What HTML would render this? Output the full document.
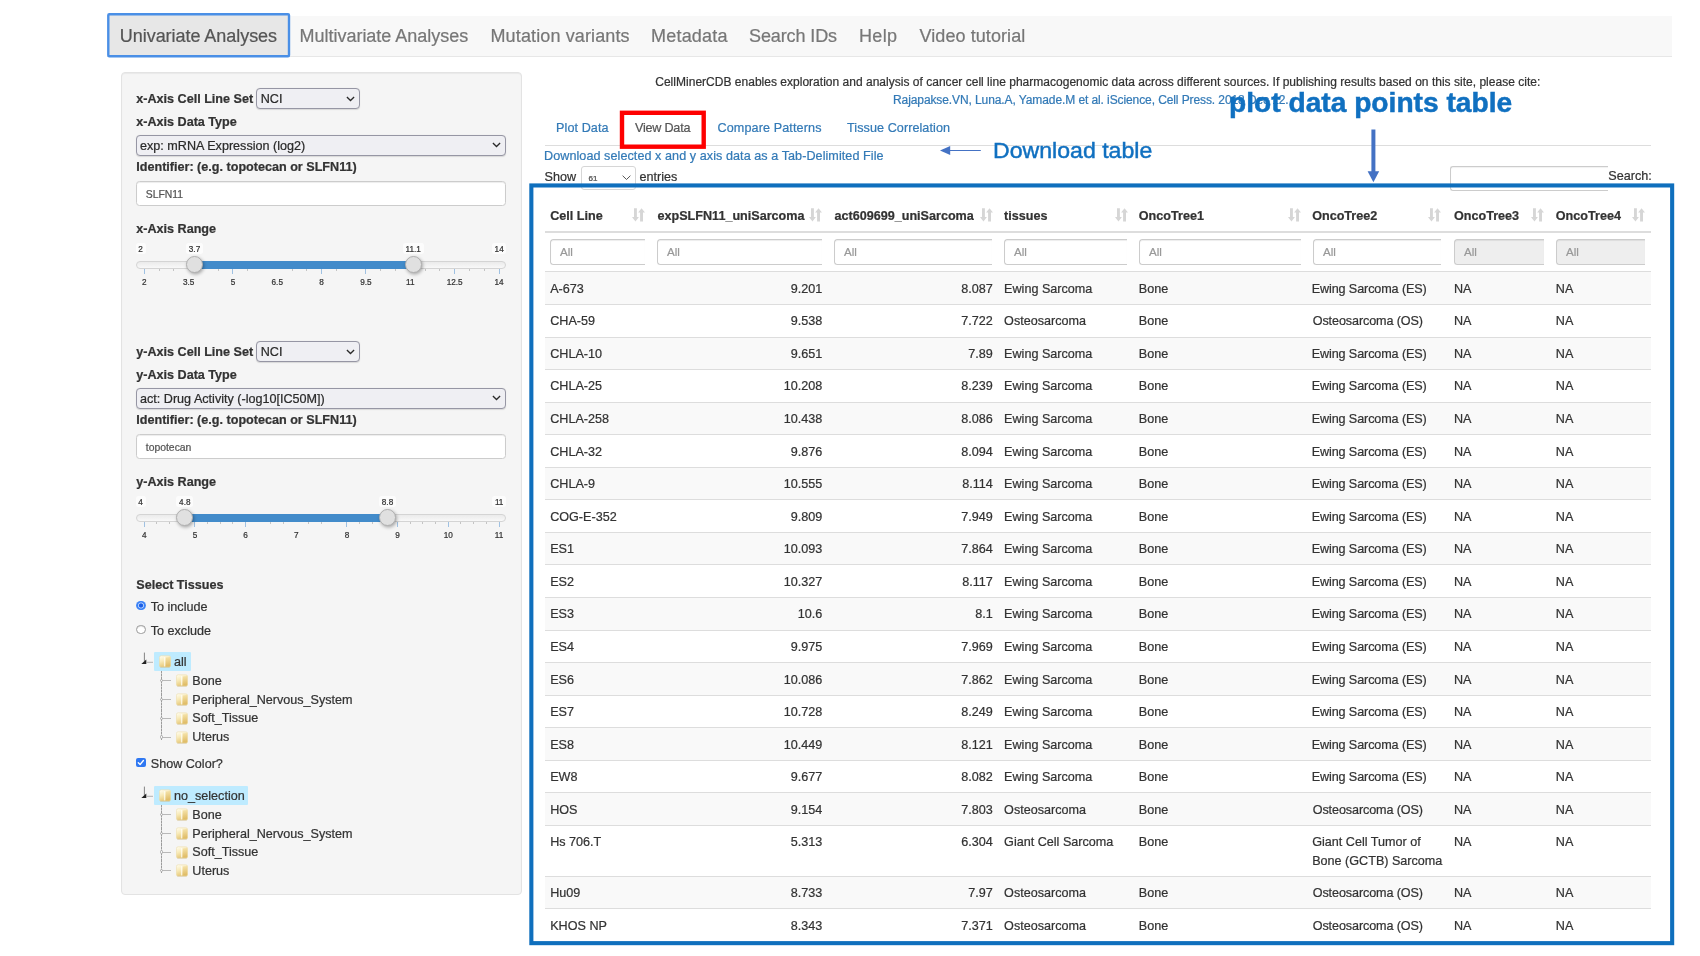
<!DOCTYPE html>
<html><head><meta charset="utf-8"><title>CellMinerCDB</title>
<style>
html,body{margin:0;padding:0;background:#fff;}
body{width:1700px;height:956px;position:relative;overflow:hidden;will-change:transform;font-family:"Liberation Sans",sans-serif;color:#333;}
.t{position:absolute;white-space:nowrap;-webkit-text-stroke:0.22px currentColor;}
.dl{-webkit-text-stroke:0.45px currentColor;}
.pd{-webkit-text-stroke:0.5px currentColor;}
.a{position:absolute;box-sizing:border-box;}
</style></head><body>

<div class="a" style="left:107px;top:16px;width:1565px;height:41px;background:#f8f8f8;border-bottom:1px solid #e7e7e7;"></div>
<svg class="a" style="left:104px;top:10px" width="190" height="51" viewBox="104 10 190 51"><rect x="108.3" y="14.2" width="180.7" height="42" rx="1" fill="#e7e7e7" stroke="#4a8fe6" stroke-width="2.4"/></svg>
<div class="t " style="top:26.00px;font-size:18px;line-height:21.6px;color:#555;left:119.80px;letter-spacing:-0.044px;">Univariate Analyses</div>
<div class="t " style="top:26.00px;font-size:18px;line-height:21.6px;color:#777;left:299.50px;letter-spacing:-0.015px;">Multivariate Analyses</div>
<div class="t " style="top:26.00px;font-size:18px;line-height:21.6px;color:#777;left:490.50px;letter-spacing:0.125px;">Mutation variants</div>
<div class="t " style="top:26.00px;font-size:18px;line-height:21.6px;color:#777;left:651.00px;letter-spacing:0.214px;">Metadata</div>
<div class="t " style="top:26.00px;font-size:18px;line-height:21.6px;color:#777;left:749.00px;letter-spacing:-0.111px;">Search IDs</div>
<div class="t " style="top:26.00px;font-size:18px;line-height:21.6px;color:#777;left:859.00px;letter-spacing:0.333px;">Help</div>
<div class="t " style="top:26.00px;font-size:18px;line-height:21.6px;color:#777;left:919.50px;letter-spacing:0.077px;">Video tutorial</div>
<div class="a" style="left:120.5px;top:72px;width:401.25px;height:823px;background:#f5f5f5;border:1px solid #e3e3e3;border-radius:4px;box-shadow:inset 0 1px 1px rgba(0,0,0,.05);"></div>
<div class="t " style="top:92.00px;font-size:12.6px;line-height:15.12px;color:#333;left:136.25px;font-weight:bold;">x-Axis Cell Line Set</div>
<div class="a" style="left:256.25px;top:88.25px;width:103.25px;height:20.5px;background:#efeff3;border:1px solid #9696a4;border-radius:4px;box-shadow:0 0.5px 1px rgba(0,0,0,.12);"></div>
<div class="t " style="top:92.00px;font-size:12.6px;line-height:15.12px;color:#2a2a2a;left:260.75px;">NCI</div>
<svg class="a" style="left:345.8px;top:95.5px" width="9" height="6" viewBox="0 0 9 6"><path d="M0.9 1 L4.5 4.5 L8.1 1" fill="none" stroke="#2a2a2a" stroke-width="1.3"/></svg>
<div class="t " style="top:115.00px;font-size:12.6px;line-height:15.12px;color:#333;left:136.25px;font-weight:bold;">x-Axis Data Type</div>
<div class="a" style="left:136.25px;top:134.5px;width:370px;height:21px;background:#efeff3;border:1px solid #9696a4;border-radius:4px;box-shadow:0 0.5px 1px rgba(0,0,0,.12);"></div>
<div class="t " style="top:139.00px;font-size:12.6px;line-height:15.12px;color:#2a2a2a;left:140.00px;">exp: mRNA Expression (log2)</div>
<svg class="a" style="left:492.3px;top:142px" width="9" height="6" viewBox="0 0 9 6"><path d="M0.9 1 L4.5 4.5 L8.1 1" fill="none" stroke="#2a2a2a" stroke-width="1.3"/></svg>
<div class="t " style="top:160.00px;font-size:12.6px;line-height:15.12px;color:#333;left:136.25px;font-weight:bold;">Identifier: (e.g. topotecan or SLFN11)</div>
<div class="a" style="left:136.25px;top:180.75px;width:370px;height:25px;background:#fff;border:1px solid #ccc;border-radius:3.5px;box-shadow:inset 0 1px 1px rgba(0,0,0,.075);"></div>
<div class="t " style="top:189.00px;font-size:10.4px;line-height:12.48px;color:#555;left:145.75px;">SLFN11</div>
<div class="t " style="top:222.00px;font-size:12.6px;line-height:15.12px;color:#333;left:136.25px;font-weight:bold;">x-Axis Range</div>
<div class="a" style="left:135.50px;top:243.4px;width:10.10px;height:10.6px;background:#fcfcfc;border-radius:2.5px;"></div>
<div class="t" style="left:135.50px;width:10.10px;text-align:center;top:244.7px;font-size:8.2px;line-height:10px;color:#333;">2</div>
<div class="a" style="left:491.80px;top:243.4px;width:14.70px;height:10.6px;background:#fcfcfc;border-radius:2.5px;"></div>
<div class="t" style="left:491.80px;width:14.70px;text-align:center;top:244.7px;font-size:8.2px;line-height:10px;color:#333;">14</div>
<div class="a" style="left:186.16px;top:243.4px;width:16.70px;height:10.6px;background:#fcfcfc;border-radius:2.5px;"></div>
<div class="t" style="left:186.16px;width:16.70px;text-align:center;top:244.7px;font-size:8.2px;line-height:10px;color:#333;">3.7</div>
<div class="a" style="left:402.62px;top:243.4px;width:21.30px;height:10.6px;background:#fcfcfc;border-radius:2.5px;"></div>
<div class="t" style="left:402.62px;width:21.30px;text-align:center;top:244.7px;font-size:8.2px;line-height:10px;color:#333;">11.1</div>
<div class="a" style="left:136.25px;top:261.25px;width:370px;height:7.5px;border:1px solid #d4d4d4;border-radius:7px;background:linear-gradient(to bottom,#e4e4e4 -50%,#fff 150%);"></div>
<div class="a" style="left:194.51px;top:261.25px;width:218.76px;height:7.3px;background:#428bca;"></div>
<div class="a" style="left:143.75px;top:268.9px;width:1px;height:5px;background:#9fc1e2;"></div>
<div class="t" style="left:124.25px;width:40px;text-align:center;top:277.7px;font-size:8.2px;line-height:10px;color:#333;">2</div>
<div class="a" style="left:158.53px;top:268.9px;width:1px;height:2.5px;background:#c4c4c4;"></div>
<div class="a" style="left:173.31px;top:268.9px;width:1px;height:2.5px;background:#c4c4c4;"></div>
<div class="t" style="left:168.59px;width:40px;text-align:center;top:277.7px;font-size:8.2px;line-height:10px;color:#333;">3.5</div>
<div class="a" style="left:217.66px;top:268.9px;width:1px;height:2.5px;background:#c4c4c4;"></div>
<div class="a" style="left:232.44px;top:268.9px;width:1px;height:5px;background:#9fc1e2;"></div>
<div class="t" style="left:212.94px;width:40px;text-align:center;top:277.7px;font-size:8.2px;line-height:10px;color:#333;">5</div>
<div class="a" style="left:247.22px;top:268.9px;width:1px;height:2.5px;background:#c4c4c4;"></div>
<div class="t" style="left:257.28px;width:40px;text-align:center;top:277.7px;font-size:8.2px;line-height:10px;color:#333;">6.5</div>
<div class="a" style="left:291.56px;top:268.9px;width:1px;height:2.5px;background:#c4c4c4;"></div>
<div class="a" style="left:306.34px;top:268.9px;width:1px;height:2.5px;background:#c4c4c4;"></div>
<div class="a" style="left:321.12px;top:268.9px;width:1px;height:5px;background:#9fc1e2;"></div>
<div class="t" style="left:301.62px;width:40px;text-align:center;top:277.7px;font-size:8.2px;line-height:10px;color:#333;">8</div>
<div class="a" style="left:335.91px;top:268.9px;width:1px;height:2.5px;background:#c4c4c4;"></div>
<div class="a" style="left:365.47px;top:268.9px;width:1px;height:5px;background:#9fc1e2;"></div>
<div class="t" style="left:345.97px;width:40px;text-align:center;top:277.7px;font-size:8.2px;line-height:10px;color:#333;">9.5</div>
<div class="a" style="left:380.25px;top:268.9px;width:1px;height:2.5px;background:#c4c4c4;"></div>
<div class="a" style="left:395.03px;top:268.9px;width:1px;height:2.5px;background:#c4c4c4;"></div>
<div class="t" style="left:390.31px;width:40px;text-align:center;top:277.7px;font-size:8.2px;line-height:10px;color:#333;">11</div>
<div class="a" style="left:424.59px;top:268.9px;width:1px;height:2.5px;background:#c4c4c4;"></div>
<div class="a" style="left:439.38px;top:268.9px;width:1px;height:2.5px;background:#c4c4c4;"></div>
<div class="a" style="left:454.16px;top:268.9px;width:1px;height:5px;background:#9fc1e2;"></div>
<div class="t" style="left:434.66px;width:40px;text-align:center;top:277.7px;font-size:8.2px;line-height:10px;color:#333;">12.5</div>
<div class="a" style="left:468.94px;top:268.9px;width:1px;height:2.5px;background:#c4c4c4;"></div>
<div class="a" style="left:483.72px;top:268.9px;width:1px;height:2.5px;background:#c4c4c4;"></div>
<div class="a" style="left:498.50px;top:268.9px;width:1px;height:5px;background:#9fc1e2;"></div>
<div class="t" style="left:479.00px;width:40px;text-align:center;top:277.7px;font-size:8.2px;line-height:10px;color:#333;">14</div>
<div class="a" style="left:186.01px;top:256.10px;width:17px;height:17px;border-radius:50%;background:#e0e0e0;border:1px solid #b0b0b0;box-shadow:1px 1.5px 3.5px rgba(0,0,0,.32);"></div>
<div class="a" style="left:404.77px;top:256.10px;width:17px;height:17px;border-radius:50%;background:#e0e0e0;border:1px solid #b0b0b0;box-shadow:1px 1.5px 3.5px rgba(0,0,0,.32);"></div>
<div class="t " style="top:345.00px;font-size:12.6px;line-height:15.12px;color:#333;left:136.25px;font-weight:bold;">y-Axis Cell Line Set</div>
<div class="a" style="left:256.25px;top:341.25px;width:103.25px;height:20.5px;background:#efeff3;border:1px solid #9696a4;border-radius:4px;box-shadow:0 0.5px 1px rgba(0,0,0,.12);"></div>
<div class="t " style="top:345.00px;font-size:12.6px;line-height:15.12px;color:#2a2a2a;left:260.75px;">NCI</div>
<svg class="a" style="left:345.8px;top:348.5px" width="9" height="6" viewBox="0 0 9 6"><path d="M0.9 1 L4.5 4.5 L8.1 1" fill="none" stroke="#2a2a2a" stroke-width="1.3"/></svg>
<div class="t " style="top:368.00px;font-size:12.6px;line-height:15.12px;color:#333;left:136.25px;font-weight:bold;">y-Axis Data Type</div>
<div class="a" style="left:136.25px;top:387.5px;width:370px;height:21px;background:#efeff3;border:1px solid #9696a4;border-radius:4px;box-shadow:0 0.5px 1px rgba(0,0,0,.12);"></div>
<div class="t " style="top:392.00px;font-size:12.6px;line-height:15.12px;color:#2a2a2a;left:140.00px;">act: Drug Activity (-log10[IC50M])</div>
<svg class="a" style="left:492.3px;top:395px" width="9" height="6" viewBox="0 0 9 6"><path d="M0.9 1 L4.5 4.5 L8.1 1" fill="none" stroke="#2a2a2a" stroke-width="1.3"/></svg>
<div class="t " style="top:413.00px;font-size:12.6px;line-height:15.12px;color:#333;left:136.25px;font-weight:bold;">Identifier: (e.g. topotecan or SLFN11)</div>
<div class="a" style="left:136.25px;top:433.75px;width:370px;height:25px;background:#fff;border:1px solid #ccc;border-radius:3.5px;box-shadow:inset 0 1px 1px rgba(0,0,0,.075);"></div>
<div class="t " style="top:442.00px;font-size:10.4px;line-height:12.48px;color:#555;left:145.75px;">topotecan</div>
<div class="t " style="top:475.00px;font-size:12.6px;line-height:15.12px;color:#333;left:136.25px;font-weight:bold;">y-Axis Range</div>
<div class="a" style="left:135.50px;top:496.4px;width:10.10px;height:10.6px;background:#fcfcfc;border-radius:2.5px;"></div>
<div class="t" style="left:135.50px;width:10.10px;text-align:center;top:497.7px;font-size:8.2px;line-height:10px;color:#333;">4</div>
<div class="a" style="left:491.80px;top:496.4px;width:14.70px;height:10.6px;background:#fcfcfc;border-radius:2.5px;"></div>
<div class="t" style="left:491.80px;width:14.70px;text-align:center;top:497.7px;font-size:8.2px;line-height:10px;color:#333;">11</div>
<div class="a" style="left:176.44px;top:496.4px;width:16.70px;height:10.6px;background:#fcfcfc;border-radius:2.5px;"></div>
<div class="t" style="left:176.44px;width:16.70px;text-align:center;top:497.7px;font-size:8.2px;line-height:10px;color:#333;">4.8</div>
<div class="a" style="left:379.16px;top:496.4px;width:16.70px;height:10.6px;background:#fcfcfc;border-radius:2.5px;"></div>
<div class="t" style="left:379.16px;width:16.70px;text-align:center;top:497.7px;font-size:8.2px;line-height:10px;color:#333;">8.8</div>
<div class="a" style="left:136.25px;top:514.25px;width:370px;height:7.5px;border:1px solid #d4d4d4;border-radius:7px;background:linear-gradient(to bottom,#e4e4e4 -50%,#fff 150%);"></div>
<div class="a" style="left:184.79px;top:514.25px;width:202.71px;height:7.3px;background:#428bca;"></div>
<div class="a" style="left:143.75px;top:521.9px;width:1px;height:5px;background:#9fc1e2;"></div>
<div class="t" style="left:124.25px;width:40px;text-align:center;top:530.7px;font-size:8.2px;line-height:10px;color:#333;">4</div>
<div class="a" style="left:156.42px;top:521.9px;width:1px;height:2.5px;background:#c4c4c4;"></div>
<div class="a" style="left:169.09px;top:521.9px;width:1px;height:2.5px;background:#c4c4c4;"></div>
<div class="a" style="left:181.76px;top:521.9px;width:1px;height:2.5px;background:#c4c4c4;"></div>
<div class="a" style="left:194.43px;top:521.9px;width:1px;height:5px;background:#9fc1e2;"></div>
<div class="t" style="left:174.93px;width:40px;text-align:center;top:530.7px;font-size:8.2px;line-height:10px;color:#333;">5</div>
<div class="a" style="left:207.10px;top:521.9px;width:1px;height:2.5px;background:#c4c4c4;"></div>
<div class="a" style="left:219.77px;top:521.9px;width:1px;height:2.5px;background:#c4c4c4;"></div>
<div class="a" style="left:232.44px;top:521.9px;width:1px;height:2.5px;background:#c4c4c4;"></div>
<div class="a" style="left:245.11px;top:521.9px;width:1px;height:5px;background:#9fc1e2;"></div>
<div class="t" style="left:225.61px;width:40px;text-align:center;top:530.7px;font-size:8.2px;line-height:10px;color:#333;">6</div>
<div class="a" style="left:270.45px;top:521.9px;width:1px;height:2.5px;background:#c4c4c4;"></div>
<div class="a" style="left:283.12px;top:521.9px;width:1px;height:2.5px;background:#c4c4c4;"></div>
<div class="t" style="left:276.29px;width:40px;text-align:center;top:530.7px;font-size:8.2px;line-height:10px;color:#333;">7</div>
<div class="a" style="left:308.46px;top:521.9px;width:1px;height:2.5px;background:#c4c4c4;"></div>
<div class="a" style="left:321.12px;top:521.9px;width:1px;height:2.5px;background:#c4c4c4;"></div>
<div class="a" style="left:346.46px;top:521.9px;width:1px;height:5px;background:#9fc1e2;"></div>
<div class="t" style="left:326.96px;width:40px;text-align:center;top:530.7px;font-size:8.2px;line-height:10px;color:#333;">8</div>
<div class="a" style="left:359.13px;top:521.9px;width:1px;height:2.5px;background:#c4c4c4;"></div>
<div class="a" style="left:371.80px;top:521.9px;width:1px;height:2.5px;background:#c4c4c4;"></div>
<div class="a" style="left:384.47px;top:521.9px;width:1px;height:2.5px;background:#c4c4c4;"></div>
<div class="a" style="left:397.14px;top:521.9px;width:1px;height:5px;background:#9fc1e2;"></div>
<div class="t" style="left:377.64px;width:40px;text-align:center;top:530.7px;font-size:8.2px;line-height:10px;color:#333;">9</div>
<div class="a" style="left:409.81px;top:521.9px;width:1px;height:2.5px;background:#c4c4c4;"></div>
<div class="a" style="left:422.48px;top:521.9px;width:1px;height:2.5px;background:#c4c4c4;"></div>
<div class="a" style="left:435.15px;top:521.9px;width:1px;height:2.5px;background:#c4c4c4;"></div>
<div class="a" style="left:447.82px;top:521.9px;width:1px;height:5px;background:#9fc1e2;"></div>
<div class="t" style="left:428.32px;width:40px;text-align:center;top:530.7px;font-size:8.2px;line-height:10px;color:#333;">10</div>
<div class="a" style="left:460.49px;top:521.9px;width:1px;height:2.5px;background:#c4c4c4;"></div>
<div class="a" style="left:473.16px;top:521.9px;width:1px;height:2.5px;background:#c4c4c4;"></div>
<div class="a" style="left:485.83px;top:521.9px;width:1px;height:2.5px;background:#c4c4c4;"></div>
<div class="a" style="left:498.50px;top:521.9px;width:1px;height:5px;background:#9fc1e2;"></div>
<div class="t" style="left:479.00px;width:40px;text-align:center;top:530.7px;font-size:8.2px;line-height:10px;color:#333;">11</div>
<div class="a" style="left:176.29px;top:509.10px;width:17px;height:17px;border-radius:50%;background:#e0e0e0;border:1px solid #b0b0b0;box-shadow:1px 1.5px 3.5px rgba(0,0,0,.32);"></div>
<div class="a" style="left:379.01px;top:509.10px;width:17px;height:17px;border-radius:50%;background:#e0e0e0;border:1px solid #b0b0b0;box-shadow:1px 1.5px 3.5px rgba(0,0,0,.32);"></div>
<div class="t " style="top:578.00px;font-size:12.6px;line-height:15.12px;color:#333;left:136.25px;font-weight:bold;">Select Tissues</div>
<div class="a" style="left:136.3px;top:600.7px;width:9.6px;height:9.6px;border-radius:50%;background:radial-gradient(circle at 50% 50%, #1d5fe6 0, #1d5fe6 1.7px, #a9c9fb 2.4px, #a9c9fb 2.7px, #3b82f6 3.4px, #3b82f6 4.3px, #5a96f7 4.8px);"></div>
<div class="t " style="top:600.00px;font-size:12.6px;line-height:15.12px;color:#333;left:150.75px;">To include</div>
<div class="a" style="left:136.3px;top:624.7px;width:9.6px;height:9.6px;border-radius:50%;background:#fff;border:1px solid #9a9a9a;box-shadow:inset 0 1px 1px rgba(0,0,0,.12);"></div>
<div class="t " style="top:624.00px;font-size:12.6px;line-height:15.12px;color:#333;left:150.75px;">To exclude</div>
<div class="a" style="left:153.9px;top:652.3px;width:37.4px;height:18.6px;background:#beebff;border-radius:1px;"></div>
<svg class="a" style="left:140px;top:651px" width="14" height="14" viewBox="0 0 14 14"><path d="M4.4 1.6 L4.4 10.6" stroke="#777" stroke-width="0.9" fill="none"/><path d="M1.3 12.9 L6.3 12.9 L6.3 8.5 Z" fill="#222"/><path d="M6.5 11.3 L13 11.3" stroke="#aaa" stroke-width="0.9" fill="none"/></svg>
<svg class="a" style="left:158.7px;top:655.2px" width="12" height="13" viewBox="0 0 12 13"><defs><linearGradient id="fg1" x1="0" y1="0" x2="0.35" y2="1"><stop offset="0" stop-color="#fffef4"/><stop offset="0.5" stop-color="#f8eab8"/><stop offset="1" stop-color="#e6c878"/></linearGradient><linearGradient id="fh1" x1="0" y1="0" x2="0" y2="1"><stop offset="0" stop-color="#f0d894"/><stop offset="1" stop-color="#dbb35a"/></linearGradient></defs><path d="M0.4 2.6 Q0.4 0.8 2.2 0.8 L9.8 0.8 Q11.6 0.8 11.6 2.6 L11.6 10.4 Q11.6 12 9.9 12 L2.1 12 Q0.4 12 0.4 10.4 Z" fill="url(#fg1)" stroke="#ead9a0" stroke-width="0.5"/><path d="M6.6 2.4 L11.2 1.9 L11.2 11.6 L6.6 11.6 Z" fill="url(#fh1)" opacity=".6"/><path d="M4.9 1.8 L6.3 2.3 L6.3 11.6 L4.9 11.6 Z" fill="#fffef6" opacity=".75"/><path d="M1.2 12.3 L10.8 12.3" stroke="#c4ab6e" stroke-width="0.7" opacity=".55"/></svg>
<div class="t " style="top:655.00px;font-size:12.6px;line-height:15.12px;color:#333;left:174.00px;">all</div>
<div class="a" style="left:161.2px;top:671px;width:1px;height:68.5px;background:repeating-linear-gradient(to bottom,#9c9c9c 0,#9c9c9c 2.2px,#c6c6c6 2.2px,#c6c6c6 3.2px);"></div>
<div class="a" style="left:162.4px;top:680.30px;width:8.8px;height:1px;background:#b8b8b8;"></div>
<div class="a" style="left:160px;top:679.10px;width:3.4px;height:3.4px;border-radius:50%;background:#f5f5f5;border:0.7px solid #aaa;"></div>
<svg class="a" style="left:176.2px;top:674.4px" width="12" height="13" viewBox="0 0 12 13"><defs><linearGradient id="fg2" x1="0" y1="0" x2="0.35" y2="1"><stop offset="0" stop-color="#fffef4"/><stop offset="0.5" stop-color="#f8eab8"/><stop offset="1" stop-color="#e6c878"/></linearGradient><linearGradient id="fh2" x1="0" y1="0" x2="0" y2="1"><stop offset="0" stop-color="#f0d894"/><stop offset="1" stop-color="#dbb35a"/></linearGradient></defs><path d="M0.4 2.6 Q0.4 0.8 2.2 0.8 L9.8 0.8 Q11.6 0.8 11.6 2.6 L11.6 10.4 Q11.6 12 9.9 12 L2.1 12 Q0.4 12 0.4 10.4 Z" fill="url(#fg2)" stroke="#ead9a0" stroke-width="0.5"/><path d="M6.6 2.4 L11.2 1.9 L11.2 11.6 L6.6 11.6 Z" fill="url(#fh2)" opacity=".6"/><path d="M4.9 1.8 L6.3 2.3 L6.3 11.6 L4.9 11.6 Z" fill="#fffef6" opacity=".75"/><path d="M1.2 12.3 L10.8 12.3" stroke="#c4ab6e" stroke-width="0.7" opacity=".55"/></svg>
<div class="t " style="top:674.00px;font-size:12.6px;line-height:15.12px;color:#333;left:192.30px;">Bone</div>
<div class="a" style="left:162.4px;top:699.05px;width:8.8px;height:1px;background:#b8b8b8;"></div>
<div class="a" style="left:160px;top:697.85px;width:3.4px;height:3.4px;border-radius:50%;background:#f5f5f5;border:0.7px solid #aaa;"></div>
<svg class="a" style="left:176.2px;top:693.15px" width="12" height="13" viewBox="0 0 12 13"><defs><linearGradient id="fg3" x1="0" y1="0" x2="0.35" y2="1"><stop offset="0" stop-color="#fffef4"/><stop offset="0.5" stop-color="#f8eab8"/><stop offset="1" stop-color="#e6c878"/></linearGradient><linearGradient id="fh3" x1="0" y1="0" x2="0" y2="1"><stop offset="0" stop-color="#f0d894"/><stop offset="1" stop-color="#dbb35a"/></linearGradient></defs><path d="M0.4 2.6 Q0.4 0.8 2.2 0.8 L9.8 0.8 Q11.6 0.8 11.6 2.6 L11.6 10.4 Q11.6 12 9.9 12 L2.1 12 Q0.4 12 0.4 10.4 Z" fill="url(#fg3)" stroke="#ead9a0" stroke-width="0.5"/><path d="M6.6 2.4 L11.2 1.9 L11.2 11.6 L6.6 11.6 Z" fill="url(#fh3)" opacity=".6"/><path d="M4.9 1.8 L6.3 2.3 L6.3 11.6 L4.9 11.6 Z" fill="#fffef6" opacity=".75"/><path d="M1.2 12.3 L10.8 12.3" stroke="#c4ab6e" stroke-width="0.7" opacity=".55"/></svg>
<div class="t " style="top:693.00px;font-size:12.6px;line-height:15.12px;color:#333;left:192.30px;">Peripheral_Nervous_System</div>
<div class="a" style="left:162.4px;top:717.80px;width:8.8px;height:1px;background:#b8b8b8;"></div>
<div class="a" style="left:160px;top:716.60px;width:3.4px;height:3.4px;border-radius:50%;background:#f5f5f5;border:0.7px solid #aaa;"></div>
<svg class="a" style="left:176.2px;top:711.9px" width="12" height="13" viewBox="0 0 12 13"><defs><linearGradient id="fg4" x1="0" y1="0" x2="0.35" y2="1"><stop offset="0" stop-color="#fffef4"/><stop offset="0.5" stop-color="#f8eab8"/><stop offset="1" stop-color="#e6c878"/></linearGradient><linearGradient id="fh4" x1="0" y1="0" x2="0" y2="1"><stop offset="0" stop-color="#f0d894"/><stop offset="1" stop-color="#dbb35a"/></linearGradient></defs><path d="M0.4 2.6 Q0.4 0.8 2.2 0.8 L9.8 0.8 Q11.6 0.8 11.6 2.6 L11.6 10.4 Q11.6 12 9.9 12 L2.1 12 Q0.4 12 0.4 10.4 Z" fill="url(#fg4)" stroke="#ead9a0" stroke-width="0.5"/><path d="M6.6 2.4 L11.2 1.9 L11.2 11.6 L6.6 11.6 Z" fill="url(#fh4)" opacity=".6"/><path d="M4.9 1.8 L6.3 2.3 L6.3 11.6 L4.9 11.6 Z" fill="#fffef6" opacity=".75"/><path d="M1.2 12.3 L10.8 12.3" stroke="#c4ab6e" stroke-width="0.7" opacity=".55"/></svg>
<div class="t " style="top:711.00px;font-size:12.6px;line-height:15.12px;color:#333;left:192.30px;">Soft_Tissue</div>
<div class="a" style="left:162.4px;top:736.55px;width:8.8px;height:1px;background:#b8b8b8;"></div>
<div class="a" style="left:160px;top:735.35px;width:3.4px;height:3.4px;border-radius:50%;background:#f5f5f5;border:0.7px solid #aaa;"></div>
<svg class="a" style="left:176.2px;top:730.65px" width="12" height="13" viewBox="0 0 12 13"><defs><linearGradient id="fg5" x1="0" y1="0" x2="0.35" y2="1"><stop offset="0" stop-color="#fffef4"/><stop offset="0.5" stop-color="#f8eab8"/><stop offset="1" stop-color="#e6c878"/></linearGradient><linearGradient id="fh5" x1="0" y1="0" x2="0" y2="1"><stop offset="0" stop-color="#f0d894"/><stop offset="1" stop-color="#dbb35a"/></linearGradient></defs><path d="M0.4 2.6 Q0.4 0.8 2.2 0.8 L9.8 0.8 Q11.6 0.8 11.6 2.6 L11.6 10.4 Q11.6 12 9.9 12 L2.1 12 Q0.4 12 0.4 10.4 Z" fill="url(#fg5)" stroke="#ead9a0" stroke-width="0.5"/><path d="M6.6 2.4 L11.2 1.9 L11.2 11.6 L6.6 11.6 Z" fill="url(#fh5)" opacity=".6"/><path d="M4.9 1.8 L6.3 2.3 L6.3 11.6 L4.9 11.6 Z" fill="#fffef6" opacity=".75"/><path d="M1.2 12.3 L10.8 12.3" stroke="#c4ab6e" stroke-width="0.7" opacity=".55"/></svg>
<div class="t " style="top:730.00px;font-size:12.6px;line-height:15.12px;color:#333;left:192.30px;">Uterus</div>
<div class="a" style="left:136.4px;top:758.1px;width:9.6px;height:9px;border-radius:2px;background:#2f78f2;"></div>
<svg class="a" style="left:136.4px;top:758.1px" width="9.6" height="9" viewBox="0 0 9.6 9"><path d="M2.3 4.7 L4.1 6.5 L7.4 2.5" fill="none" stroke="#fff" stroke-width="1.35" stroke-linecap="round" stroke-linejoin="round"/></svg>
<div class="t " style="top:757.00px;font-size:12.6px;line-height:15.12px;color:#333;left:150.75px;">Show Color?</div>
<div class="a" style="left:153.9px;top:786.05px;width:94.2px;height:18.6px;background:#beebff;border-radius:1px;"></div>
<svg class="a" style="left:140px;top:784.75px" width="14" height="14" viewBox="0 0 14 14"><path d="M4.4 1.6 L4.4 10.6" stroke="#777" stroke-width="0.9" fill="none"/><path d="M1.3 12.9 L6.3 12.9 L6.3 8.5 Z" fill="#222"/><path d="M6.5 11.3 L13 11.3" stroke="#aaa" stroke-width="0.9" fill="none"/></svg>
<svg class="a" style="left:158.7px;top:788.95px" width="12" height="13" viewBox="0 0 12 13"><defs><linearGradient id="fg6" x1="0" y1="0" x2="0.35" y2="1"><stop offset="0" stop-color="#fffef4"/><stop offset="0.5" stop-color="#f8eab8"/><stop offset="1" stop-color="#e6c878"/></linearGradient><linearGradient id="fh6" x1="0" y1="0" x2="0" y2="1"><stop offset="0" stop-color="#f0d894"/><stop offset="1" stop-color="#dbb35a"/></linearGradient></defs><path d="M0.4 2.6 Q0.4 0.8 2.2 0.8 L9.8 0.8 Q11.6 0.8 11.6 2.6 L11.6 10.4 Q11.6 12 9.9 12 L2.1 12 Q0.4 12 0.4 10.4 Z" fill="url(#fg6)" stroke="#ead9a0" stroke-width="0.5"/><path d="M6.6 2.4 L11.2 1.9 L11.2 11.6 L6.6 11.6 Z" fill="url(#fh6)" opacity=".6"/><path d="M4.9 1.8 L6.3 2.3 L6.3 11.6 L4.9 11.6 Z" fill="#fffef6" opacity=".75"/><path d="M1.2 12.3 L10.8 12.3" stroke="#c4ab6e" stroke-width="0.7" opacity=".55"/></svg>
<div class="t " style="top:789.00px;font-size:12.6px;line-height:15.12px;color:#333;left:174.00px;">no_selection</div>
<div class="a" style="left:161.2px;top:804.75px;width:1px;height:68.5px;background:repeating-linear-gradient(to bottom,#9c9c9c 0,#9c9c9c 2.2px,#c6c6c6 2.2px,#c6c6c6 3.2px);"></div>
<div class="a" style="left:162.4px;top:814.05px;width:8.8px;height:1px;background:#b8b8b8;"></div>
<div class="a" style="left:160px;top:812.85px;width:3.4px;height:3.4px;border-radius:50%;background:#f5f5f5;border:0.7px solid #aaa;"></div>
<svg class="a" style="left:176.2px;top:808.15px" width="12" height="13" viewBox="0 0 12 13"><defs><linearGradient id="fg7" x1="0" y1="0" x2="0.35" y2="1"><stop offset="0" stop-color="#fffef4"/><stop offset="0.5" stop-color="#f8eab8"/><stop offset="1" stop-color="#e6c878"/></linearGradient><linearGradient id="fh7" x1="0" y1="0" x2="0" y2="1"><stop offset="0" stop-color="#f0d894"/><stop offset="1" stop-color="#dbb35a"/></linearGradient></defs><path d="M0.4 2.6 Q0.4 0.8 2.2 0.8 L9.8 0.8 Q11.6 0.8 11.6 2.6 L11.6 10.4 Q11.6 12 9.9 12 L2.1 12 Q0.4 12 0.4 10.4 Z" fill="url(#fg7)" stroke="#ead9a0" stroke-width="0.5"/><path d="M6.6 2.4 L11.2 1.9 L11.2 11.6 L6.6 11.6 Z" fill="url(#fh7)" opacity=".6"/><path d="M4.9 1.8 L6.3 2.3 L6.3 11.6 L4.9 11.6 Z" fill="#fffef6" opacity=".75"/><path d="M1.2 12.3 L10.8 12.3" stroke="#c4ab6e" stroke-width="0.7" opacity=".55"/></svg>
<div class="t " style="top:808.00px;font-size:12.6px;line-height:15.12px;color:#333;left:192.30px;">Bone</div>
<div class="a" style="left:162.4px;top:832.80px;width:8.8px;height:1px;background:#b8b8b8;"></div>
<div class="a" style="left:160px;top:831.60px;width:3.4px;height:3.4px;border-radius:50%;background:#f5f5f5;border:0.7px solid #aaa;"></div>
<svg class="a" style="left:176.2px;top:826.9px" width="12" height="13" viewBox="0 0 12 13"><defs><linearGradient id="fg8" x1="0" y1="0" x2="0.35" y2="1"><stop offset="0" stop-color="#fffef4"/><stop offset="0.5" stop-color="#f8eab8"/><stop offset="1" stop-color="#e6c878"/></linearGradient><linearGradient id="fh8" x1="0" y1="0" x2="0" y2="1"><stop offset="0" stop-color="#f0d894"/><stop offset="1" stop-color="#dbb35a"/></linearGradient></defs><path d="M0.4 2.6 Q0.4 0.8 2.2 0.8 L9.8 0.8 Q11.6 0.8 11.6 2.6 L11.6 10.4 Q11.6 12 9.9 12 L2.1 12 Q0.4 12 0.4 10.4 Z" fill="url(#fg8)" stroke="#ead9a0" stroke-width="0.5"/><path d="M6.6 2.4 L11.2 1.9 L11.2 11.6 L6.6 11.6 Z" fill="url(#fh8)" opacity=".6"/><path d="M4.9 1.8 L6.3 2.3 L6.3 11.6 L4.9 11.6 Z" fill="#fffef6" opacity=".75"/><path d="M1.2 12.3 L10.8 12.3" stroke="#c4ab6e" stroke-width="0.7" opacity=".55"/></svg>
<div class="t " style="top:827.00px;font-size:12.6px;line-height:15.12px;color:#333;left:192.30px;">Peripheral_Nervous_System</div>
<div class="a" style="left:162.4px;top:851.55px;width:8.8px;height:1px;background:#b8b8b8;"></div>
<div class="a" style="left:160px;top:850.35px;width:3.4px;height:3.4px;border-radius:50%;background:#f5f5f5;border:0.7px solid #aaa;"></div>
<svg class="a" style="left:176.2px;top:845.65px" width="12" height="13" viewBox="0 0 12 13"><defs><linearGradient id="fg9" x1="0" y1="0" x2="0.35" y2="1"><stop offset="0" stop-color="#fffef4"/><stop offset="0.5" stop-color="#f8eab8"/><stop offset="1" stop-color="#e6c878"/></linearGradient><linearGradient id="fh9" x1="0" y1="0" x2="0" y2="1"><stop offset="0" stop-color="#f0d894"/><stop offset="1" stop-color="#dbb35a"/></linearGradient></defs><path d="M0.4 2.6 Q0.4 0.8 2.2 0.8 L9.8 0.8 Q11.6 0.8 11.6 2.6 L11.6 10.4 Q11.6 12 9.9 12 L2.1 12 Q0.4 12 0.4 10.4 Z" fill="url(#fg9)" stroke="#ead9a0" stroke-width="0.5"/><path d="M6.6 2.4 L11.2 1.9 L11.2 11.6 L6.6 11.6 Z" fill="url(#fh9)" opacity=".6"/><path d="M4.9 1.8 L6.3 2.3 L6.3 11.6 L4.9 11.6 Z" fill="#fffef6" opacity=".75"/><path d="M1.2 12.3 L10.8 12.3" stroke="#c4ab6e" stroke-width="0.7" opacity=".55"/></svg>
<div class="t " style="top:845.00px;font-size:12.6px;line-height:15.12px;color:#333;left:192.30px;">Soft_Tissue</div>
<div class="a" style="left:162.4px;top:870.30px;width:8.8px;height:1px;background:#b8b8b8;"></div>
<div class="a" style="left:160px;top:869.10px;width:3.4px;height:3.4px;border-radius:50%;background:#f5f5f5;border:0.7px solid #aaa;"></div>
<svg class="a" style="left:176.2px;top:864.4px" width="12" height="13" viewBox="0 0 12 13"><defs><linearGradient id="fg10" x1="0" y1="0" x2="0.35" y2="1"><stop offset="0" stop-color="#fffef4"/><stop offset="0.5" stop-color="#f8eab8"/><stop offset="1" stop-color="#e6c878"/></linearGradient><linearGradient id="fh10" x1="0" y1="0" x2="0" y2="1"><stop offset="0" stop-color="#f0d894"/><stop offset="1" stop-color="#dbb35a"/></linearGradient></defs><path d="M0.4 2.6 Q0.4 0.8 2.2 0.8 L9.8 0.8 Q11.6 0.8 11.6 2.6 L11.6 10.4 Q11.6 12 9.9 12 L2.1 12 Q0.4 12 0.4 10.4 Z" fill="url(#fg10)" stroke="#ead9a0" stroke-width="0.5"/><path d="M6.6 2.4 L11.2 1.9 L11.2 11.6 L6.6 11.6 Z" fill="url(#fh10)" opacity=".6"/><path d="M4.9 1.8 L6.3 2.3 L6.3 11.6 L4.9 11.6 Z" fill="#fffef6" opacity=".75"/><path d="M1.2 12.3 L10.8 12.3" stroke="#c4ab6e" stroke-width="0.7" opacity=".55"/></svg>
<div class="t " style="top:864.00px;font-size:12.6px;line-height:15.12px;color:#333;left:192.30px;">Uterus</div>
<div class="t " style="top:75.00px;font-size:12px;line-height:14.4px;color:#333;left:655.25px;letter-spacing:0.017px;">CellMinerCDB enables exploration and analysis of cancer cell line pharmacogenomic data across different sources. If publishing results based on this site, please cite:</div>
<div class="t " style="top:93.00px;font-size:12px;line-height:14.4px;color:#337ab7;left:893.00px;letter-spacing:-0.095px;">Rajapakse.VN, Luna.A, Yamade.M et al. iScience, Cell Press. 2018 Dec 12.</div>
<div class="a" style="left:544.5px;top:145px;width:1106.25px;height:1px;background:#ddd;"></div>
<div class="t " style="top:121.00px;font-size:12.6px;line-height:15.12px;color:#337ab7;left:556.00px;letter-spacing:0.094px;">Plot Data</div>
<div class="t " style="top:121.00px;font-size:12.6px;line-height:15.12px;color:#555;left:635.00px;letter-spacing:-0.219px;">View Data</div>
<div class="t " style="top:121.00px;font-size:12.6px;line-height:15.12px;color:#337ab7;left:717.50px;letter-spacing:0.117px;">Compare Patterns</div>
<div class="t " style="top:121.00px;font-size:12.6px;line-height:15.12px;color:#337ab7;left:847.00px;letter-spacing:0.074px;">Tissue Correlation</div>
<svg class="a" style="left:615px;top:106px" width="96" height="48" viewBox="615 106 96 48"><rect x="622.0" y="112.8" width="81.7" height="33.9" fill="none" stroke="#fe0000" stroke-width="4.4"/></svg>
<div class="t " style="top:149.00px;font-size:12.6px;line-height:15.12px;color:#337ab7;left:544.00px;letter-spacing:0.065px;">Download selected x and y axis data as a Tab-Delimited File</div>
<div class="t " style="top:170.00px;font-size:12.6px;line-height:15.12px;color:#333;left:544.50px;">Show</div>
<div class="a" style="left:580.5px;top:166.4px;width:55px;height:23.2px;background:#fff;border:1px solid #d6d6d6;border-radius:3px;"></div>
<div class="t " style="top:174.00px;font-size:8px;line-height:9.6px;color:#666;left:588.60px;text-shadow:0 0 0.4px #666;">61</div>
<svg class="a" style="left:622.2px;top:175.4px" width="9" height="5.4" viewBox="0 0 9 5.4"><path d="M0.6 0.7 L4.5 4.5 L8.4 0.7" fill="none" stroke="#555" stroke-width="1"/></svg>
<div class="t " style="top:170.00px;font-size:12.6px;line-height:15.12px;color:#333;left:639.50px;">entries</div>
<div class="a" style="left:1449.5px;top:166.25px;width:161px;height:24.25px;background:#fff;border:1px solid #ccc;border-right:none;border-radius:3px 0 0 3px;box-shadow:inset 0 1px 1px rgba(0,0,0,.06);"></div>
<div class="a" style="left:1608px;top:165px;width:44px;height:27px;background:#fff;"></div>
<div class="t " style="top:169.00px;font-size:12.6px;line-height:15.12px;color:#333;left:1608.30px;">Search:</div>
<div class="t " style="top:209.00px;font-size:12.6px;line-height:15.12px;color:#333;left:550.20px;font-weight:bold;">Cell Line</div>
<svg class="a" style="left:632.1px;top:208px" width="13" height="13.5" viewBox="0 0 13 13.5"><path d="M2.0 0.2 L4.9 0.2 L4.9 9.0 L6.9 9.0 L3.45 13.4 L0 9.0 L2.0 9.0 Z" fill="#d6d6d6"/><path d="M8.1 13.4 L11.0 13.4 L11.0 4.6 L13 4.6 L9.55 0.2 L6.1 4.6 L8.1 4.6 Z" fill="#d6d6d6"/></svg>
<div class="t " style="top:209.00px;font-size:12.6px;line-height:15.12px;color:#333;left:657.50px;font-weight:bold;">expSLFN11_uniSarcoma</div>
<svg class="a" style="left:809.1px;top:208px" width="13" height="13.5" viewBox="0 0 13 13.5"><path d="M2.0 0.2 L4.9 0.2 L4.9 9.0 L6.9 9.0 L3.45 13.4 L0 9.0 L2.0 9.0 Z" fill="#d6d6d6"/><path d="M8.1 13.4 L11.0 13.4 L11.0 4.6 L13 4.6 L9.55 0.2 L6.1 4.6 L8.1 4.6 Z" fill="#d6d6d6"/></svg>
<div class="t " style="top:209.00px;font-size:12.6px;line-height:15.12px;color:#333;left:834.50px;font-weight:bold;">act609699_uniSarcoma</div>
<svg class="a" style="left:979.6px;top:208px" width="13" height="13.5" viewBox="0 0 13 13.5"><path d="M2.0 0.2 L4.9 0.2 L4.9 9.0 L6.9 9.0 L3.45 13.4 L0 9.0 L2.0 9.0 Z" fill="#d6d6d6"/><path d="M8.1 13.4 L11.0 13.4 L11.0 4.6 L13 4.6 L9.55 0.2 L6.1 4.6 L8.1 4.6 Z" fill="#d6d6d6"/></svg>
<div class="t " style="top:209.00px;font-size:12.6px;line-height:15.12px;color:#333;left:1004.10px;font-weight:bold;">tissues</div>
<svg class="a" style="left:1114.6px;top:208px" width="13" height="13.5" viewBox="0 0 13 13.5"><path d="M2.0 0.2 L4.9 0.2 L4.9 9.0 L6.9 9.0 L3.45 13.4 L0 9.0 L2.0 9.0 Z" fill="#d6d6d6"/><path d="M8.1 13.4 L11.0 13.4 L11.0 4.6 L13 4.6 L9.55 0.2 L6.1 4.6 L8.1 4.6 Z" fill="#d6d6d6"/></svg>
<div class="t " style="top:209.00px;font-size:12.6px;line-height:15.12px;color:#333;left:1138.80px;font-weight:bold;">OncoTree1</div>
<svg class="a" style="left:1287.85px;top:208px" width="13" height="13.5" viewBox="0 0 13 13.5"><path d="M2.0 0.2 L4.9 0.2 L4.9 9.0 L6.9 9.0 L3.45 13.4 L0 9.0 L2.0 9.0 Z" fill="#d6d6d6"/><path d="M8.1 13.4 L11.0 13.4 L11.0 4.6 L13 4.6 L9.55 0.2 L6.1 4.6 L8.1 4.6 Z" fill="#d6d6d6"/></svg>
<div class="t " style="top:209.00px;font-size:12.6px;line-height:15.12px;color:#333;left:1312.20px;font-weight:bold;">OncoTree2</div>
<svg class="a" style="left:1428.35px;top:208px" width="13" height="13.5" viewBox="0 0 13 13.5"><path d="M2.0 0.2 L4.9 0.2 L4.9 9.0 L6.9 9.0 L3.45 13.4 L0 9.0 L2.0 9.0 Z" fill="#d6d6d6"/><path d="M8.1 13.4 L11.0 13.4 L11.0 4.6 L13 4.6 L9.55 0.2 L6.1 4.6 L8.1 4.6 Z" fill="#d6d6d6"/></svg>
<div class="t " style="top:209.00px;font-size:12.6px;line-height:15.12px;color:#333;left:1454.00px;font-weight:bold;">OncoTree3</div>
<svg class="a" style="left:1530.85px;top:208px" width="13" height="13.5" viewBox="0 0 13 13.5"><path d="M2.0 0.2 L4.9 0.2 L4.9 9.0 L6.9 9.0 L3.45 13.4 L0 9.0 L2.0 9.0 Z" fill="#d6d6d6"/><path d="M8.1 13.4 L11.0 13.4 L11.0 4.6 L13 4.6 L9.55 0.2 L6.1 4.6 L8.1 4.6 Z" fill="#d6d6d6"/></svg>
<div class="t " style="top:209.00px;font-size:12.6px;line-height:15.12px;color:#333;left:1555.80px;font-weight:bold;">OncoTree4</div>
<svg class="a" style="left:1632.1px;top:208px" width="13" height="13.5" viewBox="0 0 13 13.5"><path d="M2.0 0.2 L4.9 0.2 L4.9 9.0 L6.9 9.0 L3.45 13.4 L0 9.0 L2.0 9.0 Z" fill="#d6d6d6"/><path d="M8.1 13.4 L11.0 13.4 L11.0 4.6 L13 4.6 L9.55 0.2 L6.1 4.6 L8.1 4.6 Z" fill="#d6d6d6"/></svg>
<div class="a" style="left:544.5px;top:231.2px;width:1106.25px;height:1.8px;background:#ddd;"></div>
<div class="a" style="left:550px;top:239.25px;width:95.00px;height:25.25px;background:#fff;border:1px solid #ccc;border-right:none;border-radius:3.5px 0 0 3.5px;box-shadow:inset 0 1px 1px rgba(0,0,0,.075);"></div>
<div class="t " style="top:245.00px;font-size:11.6px;line-height:13.92px;color:#999;left:560.00px;">All</div>
<div class="a" style="left:657px;top:239.25px;width:165.00px;height:25.25px;background:#fff;border:1px solid #ccc;border-right:none;border-radius:3.5px 0 0 3.5px;box-shadow:inset 0 1px 1px rgba(0,0,0,.075);"></div>
<div class="t " style="top:245.00px;font-size:11.6px;line-height:13.92px;color:#999;left:667.00px;">All</div>
<div class="a" style="left:834px;top:239.25px;width:158.00px;height:25.25px;background:#fff;border:1px solid #ccc;border-right:none;border-radius:3.5px 0 0 3.5px;box-shadow:inset 0 1px 1px rgba(0,0,0,.075);"></div>
<div class="t " style="top:245.00px;font-size:11.6px;line-height:13.92px;color:#999;left:844.00px;">All</div>
<div class="a" style="left:1004px;top:239.25px;width:123.00px;height:25.25px;background:#fff;border:1px solid #ccc;border-right:none;border-radius:3.5px 0 0 3.5px;box-shadow:inset 0 1px 1px rgba(0,0,0,.075);"></div>
<div class="t " style="top:245.00px;font-size:11.6px;line-height:13.92px;color:#999;left:1014.00px;">All</div>
<div class="a" style="left:1139px;top:239.25px;width:162.00px;height:25.25px;background:#fff;border:1px solid #ccc;border-right:none;border-radius:3.5px 0 0 3.5px;box-shadow:inset 0 1px 1px rgba(0,0,0,.075);"></div>
<div class="t " style="top:245.00px;font-size:11.6px;line-height:13.92px;color:#999;left:1149.00px;">All</div>
<div class="a" style="left:1313px;top:239.25px;width:128.30px;height:25.25px;background:#fff;border:1px solid #ccc;border-right:none;border-radius:3.5px 0 0 3.5px;box-shadow:inset 0 1px 1px rgba(0,0,0,.075);"></div>
<div class="t " style="top:245.00px;font-size:11.6px;line-height:13.92px;color:#999;left:1323.00px;">All</div>
<div class="a" style="left:1454px;top:239.25px;width:90.00px;height:25.25px;background:#eee;border:1px solid #ccc;border-right:none;border-radius:3.5px 0 0 3.5px;box-shadow:inset 0 1px 1px rgba(0,0,0,.075);"></div>
<div class="t " style="top:245.00px;font-size:11.6px;line-height:13.92px;color:#999;left:1464.00px;">All</div>
<div class="a" style="left:1556px;top:239.25px;width:89.00px;height:25.25px;background:#eee;border:1px solid #ccc;border-right:none;border-radius:3.5px 0 0 3.5px;box-shadow:inset 0 1px 1px rgba(0,0,0,.075);"></div>
<div class="t " style="top:245.00px;font-size:11.6px;line-height:13.92px;color:#999;left:1566.00px;">All</div>
<div class="a" style="left:544.5px;top:271.40px;width:1106.25px;height:32.56px;background:#f9f9f9;border-top:1px solid #ddd;"></div>
<div class="t " style="top:282.00px;font-size:12.6px;line-height:15.12px;color:#333;left:550.20px;">A-673</div>
<div class="t " style="top:282.00px;font-size:12.6px;line-height:15.12px;color:#333;right:877.70px;text-align:right;">9.201</div>
<div class="t " style="top:282.00px;font-size:12.6px;line-height:15.12px;color:#333;right:707.20px;text-align:right;">8.087</div>
<div class="t " style="top:282.00px;font-size:12.6px;line-height:15.12px;color:#333;left:1004.10px;">Ewing Sarcoma</div>
<div class="t " style="top:282.00px;font-size:12.6px;line-height:15.12px;color:#333;left:1138.80px;">Bone</div>
<div class="t " style="top:282.00px;font-size:12.6px;line-height:15.12px;color:#333;left:1311.70px;letter-spacing:-0.106px;">Ewing Sarcoma (ES)</div>
<div class="t " style="top:282.00px;font-size:12.6px;line-height:15.12px;color:#333;left:1454.00px;">NA</div>
<div class="t " style="top:282.00px;font-size:12.6px;line-height:15.12px;color:#333;left:1555.80px;">NA</div>
<div class="a" style="left:544.5px;top:303.96px;width:1106.25px;height:32.56px;background:#fff;border-top:1px solid #ddd;"></div>
<div class="t " style="top:314.00px;font-size:12.6px;line-height:15.12px;color:#333;left:550.20px;">CHA-59</div>
<div class="t " style="top:314.00px;font-size:12.6px;line-height:15.12px;color:#333;right:877.70px;text-align:right;">9.538</div>
<div class="t " style="top:314.00px;font-size:12.6px;line-height:15.12px;color:#333;right:707.20px;text-align:right;">7.722</div>
<div class="t " style="top:314.00px;font-size:12.6px;line-height:15.12px;color:#333;left:1004.10px;">Osteosarcoma</div>
<div class="t " style="top:314.00px;font-size:12.6px;line-height:15.12px;color:#333;left:1138.80px;">Bone</div>
<div class="t " style="top:314.00px;font-size:12.6px;line-height:15.12px;color:#333;left:1312.70px;letter-spacing:-0.100px;">Osteosarcoma (OS)</div>
<div class="t " style="top:314.00px;font-size:12.6px;line-height:15.12px;color:#333;left:1454.00px;">NA</div>
<div class="t " style="top:314.00px;font-size:12.6px;line-height:15.12px;color:#333;left:1555.80px;">NA</div>
<div class="a" style="left:544.5px;top:336.53px;width:1106.25px;height:32.56px;background:#f9f9f9;border-top:1px solid #ddd;"></div>
<div class="t " style="top:347.00px;font-size:12.6px;line-height:15.12px;color:#333;left:550.20px;">CHLA-10</div>
<div class="t " style="top:347.00px;font-size:12.6px;line-height:15.12px;color:#333;right:877.70px;text-align:right;">9.651</div>
<div class="t " style="top:347.00px;font-size:12.6px;line-height:15.12px;color:#333;right:707.20px;text-align:right;">7.89</div>
<div class="t " style="top:347.00px;font-size:12.6px;line-height:15.12px;color:#333;left:1004.10px;">Ewing Sarcoma</div>
<div class="t " style="top:347.00px;font-size:12.6px;line-height:15.12px;color:#333;left:1138.80px;">Bone</div>
<div class="t " style="top:347.00px;font-size:12.6px;line-height:15.12px;color:#333;left:1311.70px;letter-spacing:-0.106px;">Ewing Sarcoma (ES)</div>
<div class="t " style="top:347.00px;font-size:12.6px;line-height:15.12px;color:#333;left:1454.00px;">NA</div>
<div class="t " style="top:347.00px;font-size:12.6px;line-height:15.12px;color:#333;left:1555.80px;">NA</div>
<div class="a" style="left:544.5px;top:369.09px;width:1106.25px;height:32.56px;background:#fff;border-top:1px solid #ddd;"></div>
<div class="t " style="top:379.00px;font-size:12.6px;line-height:15.12px;color:#333;left:550.20px;">CHLA-25</div>
<div class="t " style="top:379.00px;font-size:12.6px;line-height:15.12px;color:#333;right:877.70px;text-align:right;">10.208</div>
<div class="t " style="top:379.00px;font-size:12.6px;line-height:15.12px;color:#333;right:707.20px;text-align:right;">8.239</div>
<div class="t " style="top:379.00px;font-size:12.6px;line-height:15.12px;color:#333;left:1004.10px;">Ewing Sarcoma</div>
<div class="t " style="top:379.00px;font-size:12.6px;line-height:15.12px;color:#333;left:1138.80px;">Bone</div>
<div class="t " style="top:379.00px;font-size:12.6px;line-height:15.12px;color:#333;left:1311.70px;letter-spacing:-0.106px;">Ewing Sarcoma (ES)</div>
<div class="t " style="top:379.00px;font-size:12.6px;line-height:15.12px;color:#333;left:1454.00px;">NA</div>
<div class="t " style="top:379.00px;font-size:12.6px;line-height:15.12px;color:#333;left:1555.80px;">NA</div>
<div class="a" style="left:544.5px;top:401.66px;width:1106.25px;height:32.56px;background:#f9f9f9;border-top:1px solid #ddd;"></div>
<div class="t " style="top:412.00px;font-size:12.6px;line-height:15.12px;color:#333;left:550.20px;">CHLA-258</div>
<div class="t " style="top:412.00px;font-size:12.6px;line-height:15.12px;color:#333;right:877.70px;text-align:right;">10.438</div>
<div class="t " style="top:412.00px;font-size:12.6px;line-height:15.12px;color:#333;right:707.20px;text-align:right;">8.086</div>
<div class="t " style="top:412.00px;font-size:12.6px;line-height:15.12px;color:#333;left:1004.10px;">Ewing Sarcoma</div>
<div class="t " style="top:412.00px;font-size:12.6px;line-height:15.12px;color:#333;left:1138.80px;">Bone</div>
<div class="t " style="top:412.00px;font-size:12.6px;line-height:15.12px;color:#333;left:1311.70px;letter-spacing:-0.106px;">Ewing Sarcoma (ES)</div>
<div class="t " style="top:412.00px;font-size:12.6px;line-height:15.12px;color:#333;left:1454.00px;">NA</div>
<div class="t " style="top:412.00px;font-size:12.6px;line-height:15.12px;color:#333;left:1555.80px;">NA</div>
<div class="a" style="left:544.5px;top:434.22px;width:1106.25px;height:32.56px;background:#fff;border-top:1px solid #ddd;"></div>
<div class="t " style="top:445.00px;font-size:12.6px;line-height:15.12px;color:#333;left:550.20px;">CHLA-32</div>
<div class="t " style="top:445.00px;font-size:12.6px;line-height:15.12px;color:#333;right:877.70px;text-align:right;">9.876</div>
<div class="t " style="top:445.00px;font-size:12.6px;line-height:15.12px;color:#333;right:707.20px;text-align:right;">8.094</div>
<div class="t " style="top:445.00px;font-size:12.6px;line-height:15.12px;color:#333;left:1004.10px;">Ewing Sarcoma</div>
<div class="t " style="top:445.00px;font-size:12.6px;line-height:15.12px;color:#333;left:1138.80px;">Bone</div>
<div class="t " style="top:445.00px;font-size:12.6px;line-height:15.12px;color:#333;left:1311.70px;letter-spacing:-0.106px;">Ewing Sarcoma (ES)</div>
<div class="t " style="top:445.00px;font-size:12.6px;line-height:15.12px;color:#333;left:1454.00px;">NA</div>
<div class="t " style="top:445.00px;font-size:12.6px;line-height:15.12px;color:#333;left:1555.80px;">NA</div>
<div class="a" style="left:544.5px;top:466.79px;width:1106.25px;height:32.56px;background:#f9f9f9;border-top:1px solid #ddd;"></div>
<div class="t " style="top:477.00px;font-size:12.6px;line-height:15.12px;color:#333;left:550.20px;">CHLA-9</div>
<div class="t " style="top:477.00px;font-size:12.6px;line-height:15.12px;color:#333;right:877.70px;text-align:right;">10.555</div>
<div class="t " style="top:477.00px;font-size:12.6px;line-height:15.12px;color:#333;right:707.20px;text-align:right;">8.114</div>
<div class="t " style="top:477.00px;font-size:12.6px;line-height:15.12px;color:#333;left:1004.10px;">Ewing Sarcoma</div>
<div class="t " style="top:477.00px;font-size:12.6px;line-height:15.12px;color:#333;left:1138.80px;">Bone</div>
<div class="t " style="top:477.00px;font-size:12.6px;line-height:15.12px;color:#333;left:1311.70px;letter-spacing:-0.106px;">Ewing Sarcoma (ES)</div>
<div class="t " style="top:477.00px;font-size:12.6px;line-height:15.12px;color:#333;left:1454.00px;">NA</div>
<div class="t " style="top:477.00px;font-size:12.6px;line-height:15.12px;color:#333;left:1555.80px;">NA</div>
<div class="a" style="left:544.5px;top:499.35px;width:1106.25px;height:32.56px;background:#fff;border-top:1px solid #ddd;"></div>
<div class="t " style="top:510.00px;font-size:12.6px;line-height:15.12px;color:#333;left:550.20px;">COG-E-352</div>
<div class="t " style="top:510.00px;font-size:12.6px;line-height:15.12px;color:#333;right:877.70px;text-align:right;">9.809</div>
<div class="t " style="top:510.00px;font-size:12.6px;line-height:15.12px;color:#333;right:707.20px;text-align:right;">7.949</div>
<div class="t " style="top:510.00px;font-size:12.6px;line-height:15.12px;color:#333;left:1004.10px;">Ewing Sarcoma</div>
<div class="t " style="top:510.00px;font-size:12.6px;line-height:15.12px;color:#333;left:1138.80px;">Bone</div>
<div class="t " style="top:510.00px;font-size:12.6px;line-height:15.12px;color:#333;left:1311.70px;letter-spacing:-0.106px;">Ewing Sarcoma (ES)</div>
<div class="t " style="top:510.00px;font-size:12.6px;line-height:15.12px;color:#333;left:1454.00px;">NA</div>
<div class="t " style="top:510.00px;font-size:12.6px;line-height:15.12px;color:#333;left:1555.80px;">NA</div>
<div class="a" style="left:544.5px;top:531.92px;width:1106.25px;height:32.56px;background:#f9f9f9;border-top:1px solid #ddd;"></div>
<div class="t " style="top:542.00px;font-size:12.6px;line-height:15.12px;color:#333;left:550.20px;">ES1</div>
<div class="t " style="top:542.00px;font-size:12.6px;line-height:15.12px;color:#333;right:877.70px;text-align:right;">10.093</div>
<div class="t " style="top:542.00px;font-size:12.6px;line-height:15.12px;color:#333;right:707.20px;text-align:right;">7.864</div>
<div class="t " style="top:542.00px;font-size:12.6px;line-height:15.12px;color:#333;left:1004.10px;">Ewing Sarcoma</div>
<div class="t " style="top:542.00px;font-size:12.6px;line-height:15.12px;color:#333;left:1138.80px;">Bone</div>
<div class="t " style="top:542.00px;font-size:12.6px;line-height:15.12px;color:#333;left:1311.70px;letter-spacing:-0.106px;">Ewing Sarcoma (ES)</div>
<div class="t " style="top:542.00px;font-size:12.6px;line-height:15.12px;color:#333;left:1454.00px;">NA</div>
<div class="t " style="top:542.00px;font-size:12.6px;line-height:15.12px;color:#333;left:1555.80px;">NA</div>
<div class="a" style="left:544.5px;top:564.48px;width:1106.25px;height:32.56px;background:#fff;border-top:1px solid #ddd;"></div>
<div class="t " style="top:575.00px;font-size:12.6px;line-height:15.12px;color:#333;left:550.20px;">ES2</div>
<div class="t " style="top:575.00px;font-size:12.6px;line-height:15.12px;color:#333;right:877.70px;text-align:right;">10.327</div>
<div class="t " style="top:575.00px;font-size:12.6px;line-height:15.12px;color:#333;right:707.20px;text-align:right;">8.117</div>
<div class="t " style="top:575.00px;font-size:12.6px;line-height:15.12px;color:#333;left:1004.10px;">Ewing Sarcoma</div>
<div class="t " style="top:575.00px;font-size:12.6px;line-height:15.12px;color:#333;left:1138.80px;">Bone</div>
<div class="t " style="top:575.00px;font-size:12.6px;line-height:15.12px;color:#333;left:1311.70px;letter-spacing:-0.106px;">Ewing Sarcoma (ES)</div>
<div class="t " style="top:575.00px;font-size:12.6px;line-height:15.12px;color:#333;left:1454.00px;">NA</div>
<div class="t " style="top:575.00px;font-size:12.6px;line-height:15.12px;color:#333;left:1555.80px;">NA</div>
<div class="a" style="left:544.5px;top:597.05px;width:1106.25px;height:32.56px;background:#f9f9f9;border-top:1px solid #ddd;"></div>
<div class="t " style="top:607.00px;font-size:12.6px;line-height:15.12px;color:#333;left:550.20px;">ES3</div>
<div class="t " style="top:607.00px;font-size:12.6px;line-height:15.12px;color:#333;right:877.70px;text-align:right;">10.6</div>
<div class="t " style="top:607.00px;font-size:12.6px;line-height:15.12px;color:#333;right:707.20px;text-align:right;">8.1</div>
<div class="t " style="top:607.00px;font-size:12.6px;line-height:15.12px;color:#333;left:1004.10px;">Ewing Sarcoma</div>
<div class="t " style="top:607.00px;font-size:12.6px;line-height:15.12px;color:#333;left:1138.80px;">Bone</div>
<div class="t " style="top:607.00px;font-size:12.6px;line-height:15.12px;color:#333;left:1311.70px;letter-spacing:-0.106px;">Ewing Sarcoma (ES)</div>
<div class="t " style="top:607.00px;font-size:12.6px;line-height:15.12px;color:#333;left:1454.00px;">NA</div>
<div class="t " style="top:607.00px;font-size:12.6px;line-height:15.12px;color:#333;left:1555.80px;">NA</div>
<div class="a" style="left:544.5px;top:629.62px;width:1106.25px;height:32.56px;background:#fff;border-top:1px solid #ddd;"></div>
<div class="t " style="top:640.00px;font-size:12.6px;line-height:15.12px;color:#333;left:550.20px;">ES4</div>
<div class="t " style="top:640.00px;font-size:12.6px;line-height:15.12px;color:#333;right:877.70px;text-align:right;">9.975</div>
<div class="t " style="top:640.00px;font-size:12.6px;line-height:15.12px;color:#333;right:707.20px;text-align:right;">7.969</div>
<div class="t " style="top:640.00px;font-size:12.6px;line-height:15.12px;color:#333;left:1004.10px;">Ewing Sarcoma</div>
<div class="t " style="top:640.00px;font-size:12.6px;line-height:15.12px;color:#333;left:1138.80px;">Bone</div>
<div class="t " style="top:640.00px;font-size:12.6px;line-height:15.12px;color:#333;left:1311.70px;letter-spacing:-0.106px;">Ewing Sarcoma (ES)</div>
<div class="t " style="top:640.00px;font-size:12.6px;line-height:15.12px;color:#333;left:1454.00px;">NA</div>
<div class="t " style="top:640.00px;font-size:12.6px;line-height:15.12px;color:#333;left:1555.80px;">NA</div>
<div class="a" style="left:544.5px;top:662.18px;width:1106.25px;height:32.56px;background:#f9f9f9;border-top:1px solid #ddd;"></div>
<div class="t " style="top:673.00px;font-size:12.6px;line-height:15.12px;color:#333;left:550.20px;">ES6</div>
<div class="t " style="top:673.00px;font-size:12.6px;line-height:15.12px;color:#333;right:877.70px;text-align:right;">10.086</div>
<div class="t " style="top:673.00px;font-size:12.6px;line-height:15.12px;color:#333;right:707.20px;text-align:right;">7.862</div>
<div class="t " style="top:673.00px;font-size:12.6px;line-height:15.12px;color:#333;left:1004.10px;">Ewing Sarcoma</div>
<div class="t " style="top:673.00px;font-size:12.6px;line-height:15.12px;color:#333;left:1138.80px;">Bone</div>
<div class="t " style="top:673.00px;font-size:12.6px;line-height:15.12px;color:#333;left:1311.70px;letter-spacing:-0.106px;">Ewing Sarcoma (ES)</div>
<div class="t " style="top:673.00px;font-size:12.6px;line-height:15.12px;color:#333;left:1454.00px;">NA</div>
<div class="t " style="top:673.00px;font-size:12.6px;line-height:15.12px;color:#333;left:1555.80px;">NA</div>
<div class="a" style="left:544.5px;top:694.75px;width:1106.25px;height:32.56px;background:#fff;border-top:1px solid #ddd;"></div>
<div class="t " style="top:705.00px;font-size:12.6px;line-height:15.12px;color:#333;left:550.20px;">ES7</div>
<div class="t " style="top:705.00px;font-size:12.6px;line-height:15.12px;color:#333;right:877.70px;text-align:right;">10.728</div>
<div class="t " style="top:705.00px;font-size:12.6px;line-height:15.12px;color:#333;right:707.20px;text-align:right;">8.249</div>
<div class="t " style="top:705.00px;font-size:12.6px;line-height:15.12px;color:#333;left:1004.10px;">Ewing Sarcoma</div>
<div class="t " style="top:705.00px;font-size:12.6px;line-height:15.12px;color:#333;left:1138.80px;">Bone</div>
<div class="t " style="top:705.00px;font-size:12.6px;line-height:15.12px;color:#333;left:1311.70px;letter-spacing:-0.106px;">Ewing Sarcoma (ES)</div>
<div class="t " style="top:705.00px;font-size:12.6px;line-height:15.12px;color:#333;left:1454.00px;">NA</div>
<div class="t " style="top:705.00px;font-size:12.6px;line-height:15.12px;color:#333;left:1555.80px;">NA</div>
<div class="a" style="left:544.5px;top:727.31px;width:1106.25px;height:32.56px;background:#f9f9f9;border-top:1px solid #ddd;"></div>
<div class="t " style="top:738.00px;font-size:12.6px;line-height:15.12px;color:#333;left:550.20px;">ES8</div>
<div class="t " style="top:738.00px;font-size:12.6px;line-height:15.12px;color:#333;right:877.70px;text-align:right;">10.449</div>
<div class="t " style="top:738.00px;font-size:12.6px;line-height:15.12px;color:#333;right:707.20px;text-align:right;">8.121</div>
<div class="t " style="top:738.00px;font-size:12.6px;line-height:15.12px;color:#333;left:1004.10px;">Ewing Sarcoma</div>
<div class="t " style="top:738.00px;font-size:12.6px;line-height:15.12px;color:#333;left:1138.80px;">Bone</div>
<div class="t " style="top:738.00px;font-size:12.6px;line-height:15.12px;color:#333;left:1311.70px;letter-spacing:-0.106px;">Ewing Sarcoma (ES)</div>
<div class="t " style="top:738.00px;font-size:12.6px;line-height:15.12px;color:#333;left:1454.00px;">NA</div>
<div class="t " style="top:738.00px;font-size:12.6px;line-height:15.12px;color:#333;left:1555.80px;">NA</div>
<div class="a" style="left:544.5px;top:759.88px;width:1106.25px;height:32.56px;background:#fff;border-top:1px solid #ddd;"></div>
<div class="t " style="top:770.00px;font-size:12.6px;line-height:15.12px;color:#333;left:550.20px;">EW8</div>
<div class="t " style="top:770.00px;font-size:12.6px;line-height:15.12px;color:#333;right:877.70px;text-align:right;">9.677</div>
<div class="t " style="top:770.00px;font-size:12.6px;line-height:15.12px;color:#333;right:707.20px;text-align:right;">8.082</div>
<div class="t " style="top:770.00px;font-size:12.6px;line-height:15.12px;color:#333;left:1004.10px;">Ewing Sarcoma</div>
<div class="t " style="top:770.00px;font-size:12.6px;line-height:15.12px;color:#333;left:1138.80px;">Bone</div>
<div class="t " style="top:770.00px;font-size:12.6px;line-height:15.12px;color:#333;left:1311.70px;letter-spacing:-0.106px;">Ewing Sarcoma (ES)</div>
<div class="t " style="top:770.00px;font-size:12.6px;line-height:15.12px;color:#333;left:1454.00px;">NA</div>
<div class="t " style="top:770.00px;font-size:12.6px;line-height:15.12px;color:#333;left:1555.80px;">NA</div>
<div class="a" style="left:544.5px;top:792.44px;width:1106.25px;height:32.56px;background:#f9f9f9;border-top:1px solid #ddd;"></div>
<div class="t " style="top:803.00px;font-size:12.6px;line-height:15.12px;color:#333;left:550.20px;">HOS</div>
<div class="t " style="top:803.00px;font-size:12.6px;line-height:15.12px;color:#333;right:877.70px;text-align:right;">9.154</div>
<div class="t " style="top:803.00px;font-size:12.6px;line-height:15.12px;color:#333;right:707.20px;text-align:right;">7.803</div>
<div class="t " style="top:803.00px;font-size:12.6px;line-height:15.12px;color:#333;left:1004.10px;">Osteosarcoma</div>
<div class="t " style="top:803.00px;font-size:12.6px;line-height:15.12px;color:#333;left:1138.80px;">Bone</div>
<div class="t " style="top:803.00px;font-size:12.6px;line-height:15.12px;color:#333;left:1312.70px;letter-spacing:-0.100px;">Osteosarcoma (OS)</div>
<div class="t " style="top:803.00px;font-size:12.6px;line-height:15.12px;color:#333;left:1454.00px;">NA</div>
<div class="t " style="top:803.00px;font-size:12.6px;line-height:15.12px;color:#333;left:1555.80px;">NA</div>
<div class="a" style="left:544.5px;top:825.01px;width:1106.25px;height:50.77px;background:#fff;border-top:1px solid #ddd;"></div>
<div class="t " style="top:835.00px;font-size:12.6px;line-height:15.12px;color:#333;left:550.20px;">Hs 706.T</div>
<div class="t " style="top:835.00px;font-size:12.6px;line-height:15.12px;color:#333;right:877.70px;text-align:right;">5.313</div>
<div class="t " style="top:835.00px;font-size:12.6px;line-height:15.12px;color:#333;right:707.20px;text-align:right;">6.304</div>
<div class="t " style="top:835.00px;font-size:12.6px;line-height:15.12px;color:#333;left:1004.10px;">Giant Cell Sarcoma</div>
<div class="t " style="top:835.00px;font-size:12.6px;line-height:15.12px;color:#333;left:1138.80px;">Bone</div>
<div class="t " style="top:835.00px;font-size:12.6px;line-height:15.12px;color:#333;left:1312.20px;">Giant Cell Tumor of</div>
<div class="t " style="top:854.00px;font-size:12.6px;line-height:15.12px;color:#333;left:1312.20px;">Bone (GCTB) Sarcoma</div>
<div class="t " style="top:835.00px;font-size:12.6px;line-height:15.12px;color:#333;left:1454.00px;">NA</div>
<div class="t " style="top:835.00px;font-size:12.6px;line-height:15.12px;color:#333;left:1555.80px;">NA</div>
<div class="a" style="left:544.5px;top:875.77px;width:1106.25px;height:32.56px;background:#f9f9f9;border-top:1px solid #ddd;"></div>
<div class="t " style="top:886.00px;font-size:12.6px;line-height:15.12px;color:#333;left:550.20px;">Hu09</div>
<div class="t " style="top:886.00px;font-size:12.6px;line-height:15.12px;color:#333;right:877.70px;text-align:right;">8.733</div>
<div class="t " style="top:886.00px;font-size:12.6px;line-height:15.12px;color:#333;right:707.20px;text-align:right;">7.97</div>
<div class="t " style="top:886.00px;font-size:12.6px;line-height:15.12px;color:#333;left:1004.10px;">Osteosarcoma</div>
<div class="t " style="top:886.00px;font-size:12.6px;line-height:15.12px;color:#333;left:1138.80px;">Bone</div>
<div class="t " style="top:886.00px;font-size:12.6px;line-height:15.12px;color:#333;left:1312.70px;letter-spacing:-0.100px;">Osteosarcoma (OS)</div>
<div class="t " style="top:886.00px;font-size:12.6px;line-height:15.12px;color:#333;left:1454.00px;">NA</div>
<div class="t " style="top:886.00px;font-size:12.6px;line-height:15.12px;color:#333;left:1555.80px;">NA</div>
<div class="a" style="left:544.5px;top:908.34px;width:1106.25px;height:32.56px;background:#fff;border-top:1px solid #ddd;"></div>
<div class="t " style="top:919.00px;font-size:12.6px;line-height:15.12px;color:#333;left:550.20px;">KHOS NP</div>
<div class="t " style="top:919.00px;font-size:12.6px;line-height:15.12px;color:#333;right:877.70px;text-align:right;">8.343</div>
<div class="t " style="top:919.00px;font-size:12.6px;line-height:15.12px;color:#333;right:707.20px;text-align:right;">7.371</div>
<div class="t " style="top:919.00px;font-size:12.6px;line-height:15.12px;color:#333;left:1004.10px;">Osteosarcoma</div>
<div class="t " style="top:919.00px;font-size:12.6px;line-height:15.12px;color:#333;left:1138.80px;">Bone</div>
<div class="t " style="top:919.00px;font-size:12.6px;line-height:15.12px;color:#333;left:1312.70px;letter-spacing:-0.100px;">Osteosarcoma (OS)</div>
<div class="t " style="top:919.00px;font-size:12.6px;line-height:15.12px;color:#333;left:1454.00px;">NA</div>
<div class="t " style="top:919.00px;font-size:12.6px;line-height:15.12px;color:#333;left:1555.80px;">NA</div>
<svg class="a" style="left:525px;top:180px" width="1155" height="770" viewBox="525 180 1155 770"><rect x="531.35" y="185.45" width="1140.8" height="757.7" fill="none" stroke="#0f6fbd" stroke-width="4.1"/></svg>
<svg class="a" style="left:938px;top:144px" width="46" height="13" viewBox="0 0 46 13"><path d="M11 6.5 L42.8 6.5" stroke="#4472c4" stroke-width="1" fill="none"/><path d="M2 6.5 L12.2 2.1 L12.2 10.9 Z" fill="#4472c4"/></svg>
<div class="t dl" style="top:138.00px;font-size:22px;line-height:26.4px;color:#1070c0;left:992.70px;transform-origin:0 50%;transform:scaleX(1.0500);">Download table</div>
<div class="t pd" style="top:86.00px;font-size:28px;line-height:33.6px;color:#1070c0;left:1229.39px;font-weight:bold;transform-origin:0 50%;transform:scaleX(1.0057);">plot data points table</div>
<svg class="a" style="left:1364px;top:128px" width="20" height="56" viewBox="0 0 20 56"><path d="M9.4 1.5 L9.4 45" stroke="#4472c4" stroke-width="4" fill="none"/><path d="M3.6 43.2 L15.2 43.2 L9.4 54.2 Z" fill="#4472c4"/></svg>
</body></html>
